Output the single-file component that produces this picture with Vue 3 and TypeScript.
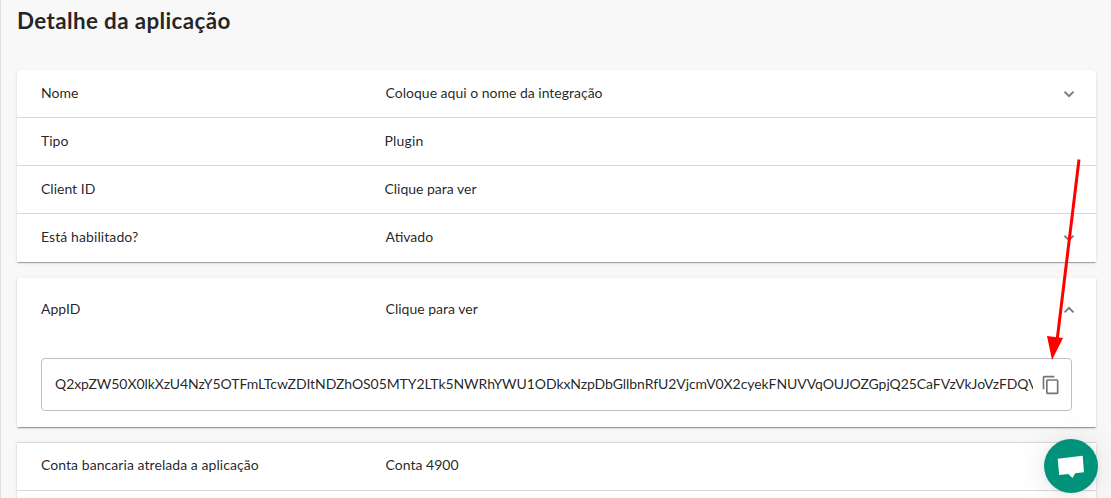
<script setup lang="ts">
interface Row {
  id: string
  label: string
  value: string
  expandable: boolean
}

const details: Row[] = [
  { id: 'nome', label: 'Nome', value: 'Coloque aqui o nome da integração', expandable: true },
  { id: 'tipo', label: 'Tipo', value: 'Plugin', expandable: false },
  { id: 'client', label: 'Client ID', value: 'Clique para ver', expandable: false },
  { id: 'estado', label: 'Está habilitado?', value: 'Ativado', expandable: true },
]

const appId =
  'Q2xpZW50X0lkXzU4NzY5OTFmLTcwZDItNDZhOS05MTY2LTk5NWRhYWU1ODkxNzpDbGllbnRfU2VjcmV0X2cyekFNUVVqOUJOZGpjQ25CaFVzVkJoVzFDQV'
</script>

<template>
  <main class="page">
    <h1 class="title">Detalhe da aplicação</h1>

    <section class="card first">
      <div v-for="row in details" :key="row.id" class="row" :class="[row.id, { plain: !row.expandable }]">
        <span class="label">{{ row.label }}</span>
        <span class="value">{{ row.value }}</span>
        <svg v-if="row.expandable" class="chevron" viewBox="0 0 24 24">
          <path d="M7.41 8.59 12 13.17l4.59-4.58L18 10l-6 6-6-6z" />
        </svg>
      </div>
    </section>

    <section class="card open">
      <div class="row head">
        <span class="label">AppID</span>
        <span class="value">Clique para ver</span>
        <svg class="chevron" viewBox="0 0 24 24">
          <path d="M7.41 15.41 12 10.83l4.59 4.58L18 14l-6-6-6 6z" />
        </svg>
      </div>
      <div class="field">
        <span class="secret">{{ appId }}</span>
        <svg class="copy" viewBox="0 0 24 24">
          <path d="M16 1H4c-1.1 0-2 .9-2 2v14h2V3h12V1zm3 4H8c-1.1 0-2 .9-2 2v14c0 1.1.9 2 2 2h11c1.1 0 2-.9 2-2V7c0-1.1-.9-2-2-2zm0 16H8V7h11v14z" />
        </svg>
      </div>
    </section>

    <section class="card last">
      <div class="row conta">
        <span class="label">Conta bancaria atrelada a aplicação</span>
        <span class="value">Conta 4900</span>
      </div>
      <div class="row"></div>
    </section>

    <svg class="arrow" viewBox="0 0 50 210">
      <path d="M39 9.5 17 191" fill="none" stroke="#f00" stroke-width="3" />
      <path d="M7 186 23 188 12 210z" fill="#f00" />
    </svg>

    <button class="chat" type="button" aria-label="Chat">
      <svg viewBox="0 0 54 54">
        <path d="M13.7 19.8 38.7 16.8 40 33.2 31.2 34.2 28.5 39 24.3 35 15.2 36z" fill="#fff" />
      </svg>
    </button>
  </main>
</template>

<style>
body {
  background: #f8f8f8;
  overflow: hidden;
}
</style>

<style scoped>
.page {
  box-sizing: border-box;
  position: relative;
  height: 498px;
  overflow: hidden;
  padding: 0 15px 0 16px;
  border-left: 1px solid #dedede;
  background: #f8f8f8;
  color: rgba(0, 0, 0, 0.87);
  font-family: Lato, 'Liberation Sans', sans-serif;
  font-size: 14px;
  line-height: 20px;
}
.title {
  height: 40px;
  margin: 0 0 30px;
  font-size: 22.4px;
  line-height: 41px;
  font-weight: 700;
  letter-spacing: 0.38px;
  white-space: nowrap;
}
.card {
  box-sizing: border-box;
  width: 1079px;
  background: #fff;
  box-shadow: 0 2px 1px -1px rgba(0, 0, 0, 0.2), 0 1px 1px rgba(0, 0, 0, 0.14), 0 1px 3px rgba(0, 0, 0, 0.12);
}
.first {
  height: 192px;
  border-radius: 4px 4px 0 0;
}
.open {
  height: 149px;
  margin-top: 16px;
}
.last {
  margin-top: 15px;
  border-top: 1px solid #d9d9d9;
}
.row {
  box-sizing: border-box;
  display: flex;
  align-items: center;
  height: 48px;
  padding: 0 17px 0 24px;
  border-bottom: 1px solid #d9d9d9;
  white-space: nowrap;
}
.first .row:last-child {
  border-bottom-color: transparent;
}
.label,
.value {
  padding-bottom: 2px;
}
.label {
  width: 344.6px;
}
.plain .label {
  width: 343.4px;
}
.value {
  flex: 1;
}
.estado .label {
  letter-spacing: 0.09px;
}
.tipo .value {
  letter-spacing: 0.2px;
}
.conta .label {
  letter-spacing: 0.06px;
}
.conta .label,
.conta .value {
  padding-bottom: 4px;
}
.head {
  height: 64px;
  border-bottom: 0;
}
.chevron {
  width: 20px;
  height: 20px;
  margin-top: 1px;
  fill: #757575;
  stroke: #757575;
  stroke-width: 0.4;
}
.head .chevron {
  margin-top: 0;
}
.field {
  box-sizing: border-box;
  display: flex;
  align-items: center;
  width: 1031px;
  height: 53px;
  margin: 16px 0 0 24px;
  padding: 0 10px 0 13px;
  border: 1px solid #bfbfbf;
  border-radius: 4px;
}
.secret {
  width: 978px;
  margin-right: 8px;
  padding-bottom: 1px;
  overflow: hidden;
  letter-spacing: -0.07px;
  white-space: nowrap;
}
.copy {
  flex: none;
  width: 20px;
  height: 20px;
  fill: #757575;
}
.arrow {
  position: absolute;
  left: 1039px;
  top: 150px;
  width: 50px;
  height: 210px;
}
.chat {
  position: absolute;
  left: 1043px;
  top: 439px;
  width: 54px;
  height: 54px;
  padding: 0;
  border: 0;
  border-radius: 50%;
  background: #009379;
  box-shadow: 0 1px 6px rgba(0, 0, 0, 0.06), 0 2px 32px rgba(0, 0, 0, 0.1);
}
.chat svg {
  display: block;
}
</style>
